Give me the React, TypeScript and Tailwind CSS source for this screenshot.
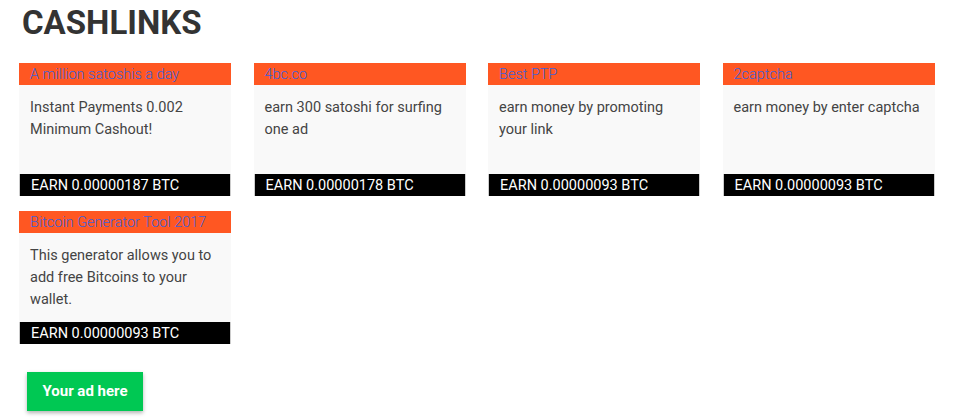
const links = [
  { title: "A million satoshis a day", text: "Instant Payments 0.002 Minimum Cashout!", earn: "0.00000187" },
  { title: "4bc.co", text: "earn 300 satoshi for surfing one ad", earn: "0.00000178" },
  { title: "Best PTP", text: "earn money by promoting your link", earn: "0.00000093" },
  { title: "2captcha", text: "earn money by enter captcha", earn: "0.00000093" },
  { title: "Bitcoin Generator Tool 2017", text: "This generator allows you to add free Bitcoins to your wallet.", earn: "0.00000093" },
];

export default function App() {
  return (
    <div className="w-[960px] h-[420px] bg-white overflow-hidden font-['Roboto',sans-serif]">
      <h1 className="px-[22px] pt-[3px] text-[33px] leading-[40px] font-bold text-[#333333]">
        CASHLINKS
      </h1>

      <div className="mt-[20px] ml-[19px] grid grid-cols-[212px_212px_212px_212px] gap-x-[22.5px] gap-y-[15px]">
        {links.map((l) => (
          <div key={l.title} className="flex flex-col">
            <div className="h-[22px] bg-[#ff5722] px-[11px] text-[14.5px] leading-[23px] font-light text-[#3f5fd8] truncate">
              {l.title}
            </div>
            <div className="h-[89px] bg-[#f9f9f9] px-[11px] pt-[12px] text-[14.5px] leading-[22px] text-[#444444]">
              {l.text}
            </div>
            <div className="h-[22px] bg-black px-[11px] text-[14.5px] leading-[23px] text-white border-l border-r border-[#cccccc]">
              EARN {l.earn} BTC
            </div>
          </div>
        ))}
      </div>

      <button className="mt-[28px] ml-[27px] w-[116px] h-[39px] bg-[#00c853] text-white text-[15px] font-bold shadow-[0_2px_4px_rgba(0,0,0,0.3)]">
        Your ad here
      </button>
    </div>
  );
}
